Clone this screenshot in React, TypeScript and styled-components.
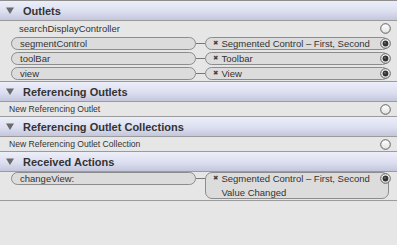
import React from "react";
import styled, { createGlobalStyle } from "styled-components";

const GlobalStyle = createGlobalStyle`
    html, body {
        margin: 0;
        padding: 0;
        background: #e6e6e6;
    }
    body {
        font-family: "Liberation Sans", Arial, sans-serif;
        color: #3a3a3a;
    }
`;

const Panel = styled.div`
    display: flex;
    flex-direction: column;
    width: 397px;
    height: 245px;
    border-top: 1px solid #8e8e8e;
    background: #e6e6e6;
    box-sizing: border-box;
`;

const Section = styled.section`
    display: flex;
    flex-direction: column;
    border-bottom: 1px solid #9b9b9b;
`;

const Header = styled.div`
    display: flex;
    align-items: center;
    gap: 9px;
    height: 19px;
    padding-left: 6px;
    border-bottom: 1px solid #9b9b9b;
    background: linear-gradient(#eceef9, #dcdff0 55%, #c4c7dc);
    font-size: 11px;
    font-weight: bold;
    color: #333;
`;

const Row = styled.div<{ $plain?: boolean }>`
    position: relative;
    display: flex;
    align-items: flex-start;
    height: ${(p) => (p.$plain ? 14 : 15)}px;
    padding: 1px 0 1px 11px;
    box-sizing: border-box;
    line-height: 12px;
`;

const ActionRow = styled(Row)`
    height: auto;
    padding: 0 0 1px 11px;
`;

const Label = styled.span<{ $small?: boolean }>`
    padding-left: ${(p) => (p.$small ? 0 : 8)}px;
    margin-left: ${(p) => (p.$small ? -2 : 0)}px;
    font-size: ${(p) => (p.$small ? 8.6 : 9.5)}px;
    line-height: ${(p) => (p.$small ? 12 : 13)}px;
    color: #333;
`;

const Pill = styled.div`
    position: relative;
    display: flex;
    align-items: flex-start;
    box-sizing: border-box;
    min-height: 13px;
    border: 1px solid #8c8c8c;
    border-radius: 7px;
    background: #dcdcdc;
    font-size: 9.5px;
    line-height: 11px;
    color: #333;
`;

const SourcePill = styled(Pill)`
    width: 185px;
    height: 13px;
    padding-left: 8px;
`;

const TargetPill = styled(Pill)`
    flex: 1;
    margin-right: 8px;
    padding: 0 16px 0 7px;
    gap: 3px;
`;

const Connector = styled.div`
    width: 9px;
    height: 1px;
    margin-top: 6px;
    background: #777;
`;

const Cross = styled.span`
    font-family: "DejaVu Sans", sans-serif;
    font-size: 6.5px;
    line-height: 11px;
    color: #444;
`;

const TargetText = styled.div`
    display: flex;
    flex-direction: column;
    gap: 3px;
    line-height: 11px;
`;

const Handle = styled.svg<{ $inPill?: boolean }>`
    position: absolute;
    width: 11px;
    height: 11px;
    right: ${(p) => (p.$inPill ? -3 : 6)}px;
    top: ${(p) => (p.$inPill ? "0" : "50%")};
    margin-top: ${(p) => (p.$inPill ? 0 : -5.5)}px;
`;

const Triangle = () => (
    <svg width="8" height="7" viewBox="0 0 8 7">
        <polygon points="0,0.5 8,0.5 4,7" fill="#6a6a6a" />
    </svg>
);

const Circle: React.FC<{ filled?: boolean; inPill?: boolean }> = ({ filled, inPill }) => (
    <Handle $inPill={inPill} viewBox="0 0 11 11">
        <defs>
            <linearGradient id="hg" x1="0" y1="0" x2="0" y2="1">
                <stop offset="0" stopColor="#ffffff" />
                <stop offset="1" stopColor="#e2e2e2" />
            </linearGradient>
        </defs>
        <circle cx="5.5" cy="5.5" r="4.8" fill="url(#hg)" stroke="#5e5e5e" strokeWidth="1" />
        {filled && <circle cx="5.5" cy="5.5" r="2.9" fill="#333" />}
        {filled && <circle cx="5" cy="4.8" r="0.9" fill="#777" />}
    </Handle>
);

const LinkBody: React.FC<{ source: string; target: string[] }> = ({ source, target }) => (
    <>
        <SourcePill>{source}</SourcePill>
        <Connector />
        <TargetPill>
            <Cross>✖</Cross>
            <TargetText>
                {target.map((line) => (
                    <span key={line}>{line}</span>
                ))}
            </TargetText>
            <Circle filled inPill />
        </TargetPill>
    </>
);

export default function App() {
    return (
        <>
            <GlobalStyle />
            <Panel>
                <Section>
                    <Header>
                        <Triangle />
                        Outlets
                    </Header>
                    <Row>
                        <Label>searchDisplayController</Label>
                        <Circle />
                    </Row>
                    <Row>
                        <LinkBody source="segmentControl" target={["Segmented Control – First, Second"]} />
                    </Row>
                    <Row>
                        <LinkBody source="toolBar" target={["Toolbar"]} />
                    </Row>
                    <Row>
                        <LinkBody source="view" target={["View"]} />
                    </Row>
                </Section>
                <Section>
                    <Header>
                        <Triangle />
                        Referencing Outlets
                    </Header>
                    <Row $plain>
                        <Label $small>New Referencing Outlet</Label>
                        <Circle />
                    </Row>
                </Section>
                <Section>
                    <Header>
                        <Triangle />
                        Referencing Outlet Collections
                    </Header>
                    <Row $plain>
                        <Label $small>New Referencing Outlet Collection</Label>
                        <Circle />
                    </Row>
                </Section>
                <Section>
                    <Header>
                        <Triangle />
                        Received Actions
                    </Header>
                    <ActionRow>
                        <LinkBody
                            source="changeView:"
                            target={["Segmented Control – First, Second", "Value Changed"]}
                        />
                    </ActionRow>
                </Section>
            </Panel>
        </>
    );
}
